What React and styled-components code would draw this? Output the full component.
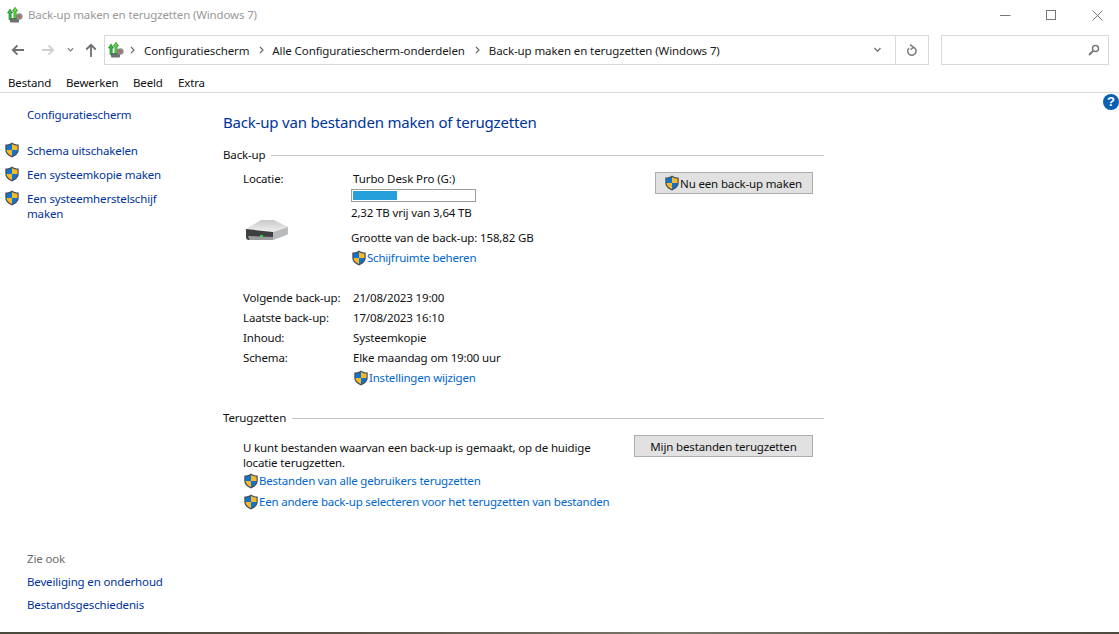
import React from 'react';
import styled, { createGlobalStyle } from 'styled-components';

const GlobalStyle = createGlobalStyle`
  html, body { margin: 0; padding: 0; background: #fff; }
  body { font-family: "Noto Sans", "Open Sans", sans-serif; font-size: 11.5px; letter-spacing: -0.15px; color: #111; overflow: hidden; }
`;

const Window = styled.div`
  position: relative;
  width: 1119px;
  height: 634px;
  display: flex;
  flex-direction: column;
  overflow: hidden;
`;

const TitleBar = styled.div`
  height: 30px;
  flex: none;
  display: flex;
  align-items: center;
  padding-left: 7px;
  gap: 5px;
  color: #999;
`;

const TitleText = styled.span`
  flex: 1;
  line-height: 16px;
`;

const WinButtons = styled.div`
  display: flex;
  align-items: center;
  gap: 35px;
  padding-right: 16px;
  height: 100%;
`;

const NavBar = styled.div`
  height: 34px;
  flex: none;
  display: flex;
  align-items: flex-start;
  padding: 5px 11px 0 11px;
`;

const NavButtons = styled.div`
  width: 93px;
  height: 30px;
  flex: none;
  display: flex;
  align-items: center;
`;

const NavSlot = styled.span`
  display: flex;
  width: ${({ $w }) => $w}px;
`;

const AddressBox = styled.div`
  width: 825px;
  height: 30px;
  box-sizing: border-box;
  flex: none;
  border: 1px solid #d9d9d9;
  display: flex;
  align-items: center;
  padding-left: 3px;
  color: #1a1a1a;
  letter-spacing: -0.1px;
`;

const Crumb = styled.span`
  margin-left: ${({ $gap }) => $gap || 0}px;
  white-space: nowrap;
`;

const CrumbSep = styled.span`
  display: flex;
  margin-left: ${({ $ml }) => $ml}px;
`;

const AddressEnd = styled.div`
  margin-left: auto;
  display: flex;
  align-items: center;
  height: 100%;
`;

const RefreshCell = styled.div`
  width: 32px;
  height: 100%;
  border-left: 1px solid #d9d9d9;
  margin-left: 13px;
  display: flex;
  align-items: center;
  justify-content: center;
`;

const SearchBox = styled.div`
  margin-left: 12px;
  width: 168px;
  height: 30px;
  box-sizing: border-box;
  flex: none;
  border: 1px solid #d9d9d9;
  display: flex;
  align-items: center;
  justify-content: flex-end;
  padding-right: 8px;
`;

const MenuBar = styled.div`
  height: 24px;
  box-sizing: border-box;
  flex: none;
  display: flex;
  align-items: flex-end;
  padding: 0 0 0 8px;
  border-bottom: 1px solid #d9d9d9;
`;

const MenuEntry = styled.span`
  width: ${({ $w }) => $w}px;
  line-height: 18px;
`;

const Body = styled.div`
  flex: 1;
  display: flex;
  min-height: 0;
`;

const Sidebar = styled.aside`
  width: 223px;
  flex: none;
  display: flex;
  flex-direction: column;
  padding: 14px 0 19px 4px;
  box-sizing: border-box;
`;

const SideHome = styled.a`
  color: #003399;
  margin: 0 0 20px 23px;
  line-height: 16px;
`;

const SideTask = styled.div`
  display: flex;
  align-items: flex-start;
  gap: 7px;
  margin-bottom: 9px;
  color: #003399;
  line-height: 15px;
  width: 170px;
  svg { flex: none; margin-top: -1px; }
`;

const SeeAlso = styled.div`
  margin-top: auto;
  padding-left: 23px;
  display: flex;
  flex-direction: column;
  gap: 7px;
  line-height: 16px;
`;

const SeeAlsoTitle = styled.span`
  color: #6d6d6d;
`;

const SeeAlsoLink = styled.a`
  color: #003399;
`;

const Main = styled.main`
  width: 601px;
  flex: none;
  padding-top: 18px;
`;

const Heading = styled.h1`
  margin: 0 0 14px;
  font-size: 15px;
  font-weight: 400;
  line-height: 22px;
  letter-spacing: -0.19px;
  color: #003399;
`;

const SectionHead = styled.div`
  display: flex;
  align-items: center;
  gap: 6px;
  line-height: 16px;
  margin-top: ${({ $mt }) => $mt || 0}px;
  &::after {
    content: '';
    flex: 1;
    height: 1px;
    background: #c8c8c8;
  }
`;

const SectionBody = styled.div`
  display: flex;
  justify-content: space-between;
  align-items: flex-start;
  padding: ${({ $top }) => $top}px 11px 0 20px;
`;

const Column = styled.div`
  display: flex;
  flex-direction: column;
`;

const LocationRow = styled.div`
  display: grid;
  grid-template-columns: 108px 1fr;
  margin-bottom: 22px;
`;

const LocationLabel = styled.div`
  display: flex;
  flex-direction: column;
  line-height: 16px;
  padding-top: 1px;
  svg { margin: 31px 0 0 2px; }
`;

const LocationInfo = styled.div`
  display: flex;
  flex-direction: column;
  line-height: 16px;
`;

const DriveName = styled.span`
  margin-left: 2px;
  padding-top: 1px;
  margin-bottom: -1px;
  letter-spacing: -0.1px;
`;

const UsageBar = styled.div`
  width: 125px;
  height: 13px;
  box-sizing: border-box;
  margin: 3px 0 3px;
  border: 1px solid #9e9e9e;
  padding: 1px 0 1px 1px;
  background: #fff;
`;

const UsageFill = styled.div`
  height: 100%;
  background: #26a0da;
`;

const BackupSize = styled.span`
  margin: 9px 0 4px;
`;

const ActionLink = styled.a`
  display: flex;
  align-items: center;
  color: #0066cc;
  line-height: 16px;
  white-space: nowrap;
  letter-spacing: -0.2px;
  margin-top: ${({ $mt }) => $mt || 0}px;
  margin-bottom: ${({ $mb }) => $mb || 0}px;
`;

const InfoRow = styled.div`
  display: grid;
  grid-template-columns: 110px 1fr;
  line-height: 20px;
`;

const RestoreText = styled.p`
  margin: 0 0 3px;
  width: 350px;
  line-height: 15px;
`;

const Button = styled.button`
  width: ${({ $w }) => $w}px;
  height: 22px;
  box-sizing: border-box;
  margin-top: ${({ $mt }) => $mt || 0}px;
  border: 1px solid #adadad;
  background: #e1e1e1;
  font: inherit;
  letter-spacing: inherit;
  color: #111;
  display: flex;
  align-items: center;
  justify-content: center;
  padding: 0 ${({ $pr }) => $pr || 0}px 0 0;
`;

const HelpBadge = styled.span`
  position: absolute;
  right: 0;
  top: 94px;
  width: 16px;
  height: 16px;
  border-radius: 50%;
  background: #0a5fb4;
  color: #fff;
  font-family: "Liberation Sans", sans-serif;
  font-weight: 700;
  font-size: 13px;
  line-height: 16px;
  text-align: center;
`;

const DesktopStrip = styled.div`
  height: 2px;
  flex: none;
  background: linear-gradient(90deg, #4a4a3a, #5a5346 30%, #77776a 60%, #4e4a40);
`;

const Shield = ({ size = 16 }) => (
  <svg width={size} height={size} viewBox="0 0 16 16">
    <path d="M8 .6C6 2 4 2.600 1.300 2.600v5.200c0 3.400 2.600 6 6.700 7.600 4.100-1.600 6.700-4.200 6.700-7.600V2.600C12 2.600 10 2 8 .6z" fill="#44505c" />
    <path d="M8 2C6.300 3 4.500 3.600 2.500 3.700V8h5.500z" fill="#1273c9" />
    <path d="M8 2v6h5.500V3.700C11.500 3.600 9.700 3 8 2z" fill="#f6b92c" />
    <path d="M2.500 8c.2 2.800 2.300 4.700 5.500 6V8z" fill="#f6b92c" />
    <path d="M13.500 8c-.2 2.800-2.300 4.700-5.500 6V8z" fill="#1273c9" />
  </svg>
);

const BackupLogo = () => (
  <svg width="16" height="16" viewBox="0 0 16 16">
    <rect x="3" y="11" width="9" height="4.500" rx="1" fill="#6e7073" />
    <circle cx="12.300" cy="9.500" r="3.300" fill="#8d8d92" />
    <circle cx="12.300" cy="9.500" r="1.200" fill="#d9543c" />
    <path d="M3 2 .5 6h1.500v6.500h2.200V6h1.400z" fill="#2fbf3f" stroke="#1a6b26" strokeWidth=".6" />
    <path d="M8 .3 5.400 4h1.500v7.500h2.200V4h1.500z" fill="#5fe03a" stroke="#1a6b26" strokeWidth=".6" />
  </svg>
);

const DriveIcon = () => (
  <svg width="44" height="24" viewBox="0 0 44 24">
    <defs>
      <linearGradient id="driveTop" x1="0" y1="0" x2="0" y2="1">
        <stop offset="0" stopColor="#c9c9cb" />
        <stop offset="1" stopColor="#f0f0f1" />
      </linearGradient>
    </defs>
    <path d="M1 11 16 2h13l14 7-15 5z" fill="url(#driveTop)" />
    <path d="M1 11l27 3v8H4c-2 0-3-1-3-3z" fill="#3d3f40" />
    <path d="M3 18l25 1v3H4.500z" fill="#9a9b9d" />
    <path d="M28 14l15-5v6c0 1-.4 1.500-1.200 1.900L28 22z" fill="#b9babc" />
    <rect x="15" y="17" width="3" height="2" fill="#35d14a" />
  </svg>
);

const Chevron = ({ color = '#7a7a7a', w = 8 }) => (
  <svg width={w} height="6" viewBox="0 0 8 6" fill="none" stroke={color} strokeWidth="1.500">
    <path d="M1 1l3 3.200L7 1" />
  </svg>
);

const CrumbArrow = () => (
  <svg width="5" height="8" viewBox="0 0 5 8" fill="none" stroke="#6a6a6a" strokeWidth="1.200">
    <path d="M1 1l3 3-3 3" />
  </svg>
);

const Arrow = ({ color, flip }) => (
  <svg width="14" height="12" viewBox="0 0 14 12" fill="none" stroke={color} strokeWidth="1.800" style={flip ? { transform: 'scaleX(-1)' } : undefined}>
    <path d="M13 6H2M6.500 1.300 1.800 6l4.700 4.700" />
  </svg>
);

const UpArrow = () => (
  <svg width="12" height="14" viewBox="0 0 12 14" fill="none" stroke="#6f6f6f" strokeWidth="1.800">
    <path d="M6 14V2M1.300 6.500 6 1.800l4.700 4.700" />
  </svg>
);

const App = () => (
  <Window>
    <GlobalStyle />
    <TitleBar>
      <BackupLogo />
      <TitleText>Back-up maken en terugzetten (Windows 7)</TitleText>
      <WinButtons>
        <svg width="11" height="11" viewBox="0 0 11 11"><path d="M0 5.500h10.500" stroke="#777" /></svg>
        <svg width="11" height="11" viewBox="0 0 11 11"><rect x=".5" y=".5" width="9" height="9" fill="none" stroke="#777" /></svg>
        <svg width="11" height="11" viewBox="0 0 11 11"><path d="M.5.500l10 10M10.500.500l-10 10" stroke="#777" /></svg>
      </WinButtons>
    </TitleBar>

    <NavBar>
      <NavButtons>
        <NavSlot $w={30}><Arrow color="#6f6f6f" /></NavSlot>
        <NavSlot $w={26}><Arrow color="#d0d0d0" flip /></NavSlot>
        <NavSlot $w={18}><Chevron color="#8a8a8a" w={7} /></NavSlot>
        <NavSlot $w={12}><UpArrow /></NavSlot>
      </NavButtons>
      <AddressBox>
        <BackupLogo />
        <CrumbSep $ml={6}><CrumbArrow /></CrumbSep>
        <Crumb $gap={9}>Configuratiescherm</Crumb>
        <CrumbSep $ml={10}><CrumbArrow /></CrumbSep>
        <Crumb $gap={8}>Alle Configuratiescherm-onderdelen</Crumb>
        <CrumbSep $ml={10}><CrumbArrow /></CrumbSep>
        <Crumb $gap={9}>Back-up maken en terugzetten (Windows 7)</Crumb>
        <AddressEnd>
          <Chevron w={9} />
          <RefreshCell>
            <svg width="12" height="13" viewBox="0 0 12 13" fill="none" stroke="#7a7a7a" strokeWidth="1.500">
              <path d="M7.500 3.200A4.200 4.200 0 1 1 3 4M4 .6l3.500 2.600-3 2.600" />
            </svg>
          </RefreshCell>
        </AddressEnd>
      </AddressBox>
      <SearchBox>
        <svg width="12" height="12" viewBox="0 0 12 12" fill="none" stroke="#7a7a7a">
          <circle cx="7.500" cy="4.500" r="3" strokeWidth="1.500" />
          <path d="M5.200 6.800 1 11" strokeWidth="2" />
        </svg>
      </SearchBox>
    </NavBar>

    <MenuBar>
      <MenuEntry $w={58}>Bestand</MenuEntry>
      <MenuEntry $w={67}>Bewerken</MenuEntry>
      <MenuEntry $w={45}>Beeld</MenuEntry>
      <MenuEntry $w={40}>Extra</MenuEntry>
    </MenuBar>

    <HelpBadge>?</HelpBadge>

    <Body>
      <Sidebar>
        <SideHome>Configuratiescherm</SideHome>
        <SideTask><Shield />Schema uitschakelen</SideTask>
        <SideTask><Shield />Een systeemkopie maken</SideTask>
        <SideTask><Shield />Een systeemherstelschijf maken</SideTask>
        <SeeAlso>
          <SeeAlsoTitle>Zie ook</SeeAlsoTitle>
          <SeeAlsoLink>Beveiliging en onderhoud</SeeAlsoLink>
          <SeeAlsoLink>Bestandsgeschiedenis</SeeAlsoLink>
        </SeeAlso>
      </Sidebar>

      <Main>
        <Heading>Back-up van bestanden maken of terugzetten</Heading>
        <SectionHead>Back-up</SectionHead>
        <SectionBody $top={7}>
          <Column>
            <LocationRow>
              <LocationLabel>
                Locatie:
                <DriveIcon />
              </LocationLabel>
              <LocationInfo>
                <DriveName>Turbo Desk Pro (G:)</DriveName>
                <UsageBar><UsageFill style={{ width: `${(1.32 / 3.64) * 100}%` }} /></UsageBar>
                <span>2,32 TB vrij van 3,64 TB</span>
                <BackupSize>Grootte van de back-up: 158,82 GB</BackupSize>
                <ActionLink><Shield />Schijfruimte beheren</ActionLink>
              </LocationInfo>
            </LocationRow>
            <InfoRow><span>Volgende back-up:</span><span>21/08/2023 19:00</span></InfoRow>
            <InfoRow><span>Laatste back-up:</span><span>17/08/2023 16:10</span></InfoRow>
            <InfoRow><span>Inhoud:</span><span>Systeemkopie</span></InfoRow>
            <InfoRow><span>Schema:</span><span>Elke maandag om 19:00 uur</span></InfoRow>
            <InfoRow>
              <span />
              <ActionLink $mt={2}><Shield />Instellingen wijzigen</ActionLink>
            </InfoRow>
          </Column>
          <Button $w={158} $mt={2} $pr={2}><Shield />Nu een back-up maken</Button>
        </SectionBody>

        <SectionHead $mt={24}>Terugzetten</SectionHead>
        <SectionBody $top={14}>
          <Column>
            <RestoreText>U kunt bestanden waarvan een back-up is gemaakt, op de huidige locatie terugzetten.</RestoreText>
            <ActionLink $mb={5}><Shield />Bestanden van alle gebruikers terugzetten</ActionLink>
            <ActionLink><Shield />Een andere back-up selecteren voor het terugzetten van bestanden</ActionLink>
          </Column>
          <Button $w={179} $mt={-5}>Mijn bestanden terugzetten</Button>
        </SectionBody>
      </Main>
    </Body>
    <DesktopStrip />
  </Window>
);

export default App;
